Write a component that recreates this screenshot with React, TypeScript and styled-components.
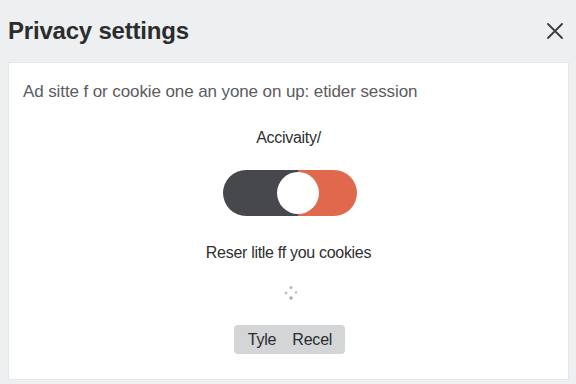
import React from "react";
import styled, { createGlobalStyle } from "styled-components";

const Global = createGlobalStyle`
  html, body {
    margin: 0;
    padding: 0;
    background: #eeeff1;
    font-family: "Liberation Sans", Arial, sans-serif;
  }
`;

const Page = styled.div`
  width: 576px;
  height: 384px;
  display: flex;
  flex-direction: column;
  box-sizing: border-box;
  padding: 0 7px 4px 8px;
`;

const Header = styled.div`
  height: 62px;
  display: flex;
  align-items: center;
  justify-content: space-between;
`;

const Title = styled.h1`
  margin: 0;
  font-size: 24px;
  font-weight: 700;
  color: #2b2c2e;
  letter-spacing: -0.2px;
`;

const Close = styled.button`
  border: 0;
  background: none;
  padding: 0;
  width: 22px;
  height: 22px;
  display: flex;
  align-items: center;
  justify-content: center;
  margin-right: 3px;
`;

const Card = styled.div`
  flex: 1;
  background: #ffffff;
  border: 1px solid #e6e7e9;
  display: flex;
  flex-direction: column;
  align-items: center;
`;

const Intro = styled.p`
  align-self: stretch;
  margin: 19px 0 0 14px;
  font-size: 17px;
  line-height: 20px;
  color: #5a5b5e;
  letter-spacing: -0.1px;
`;

const Label = styled.div<{ $top: number }>`
  margin-top: ${(p) => p.$top}px;
  font-size: 16px;
  line-height: 18px;
  color: #2e2f31;
  letter-spacing: -0.3px;
`;

const Toggle = styled.div`
  margin-top: 23px;
  width: 134px;
  height: 46px;
  border-radius: 23px;
  overflow: hidden;
  display: flex;
  align-items: center;
  justify-content: center;
  background: linear-gradient(to right, #47484c 0 56%, #e0684c 56% 100%);
  margin-left: 2px;
`;

const Knob = styled.div`
  width: 42px;
  height: 42px;
  border-radius: 50%;
  background: #ffffff;
  margin-left: 16px;
`;

const Spinner = styled.svg`
  margin-top: 23px;
  margin-left: 4px;
`;

const Actions = styled.div`
  margin-top: 24px;
  display: flex;
  gap: 16px;
  background: #d4d5d7;
  border-radius: 4px;
  padding: 0 13px 0 14px;
  height: 29px;
  align-items: center;
  margin-left: 2px;
`;

const Action = styled.span`
  font-size: 16px;
  color: #2a2b2d;
  letter-spacing: -0.2px;
`;

export default function App() {
  return (
    <>
      <Global />
      <Page>
        <Header>
          <Title>Privacy settings</Title>
          <Close aria-label="Close">
            <svg width="18" height="18" viewBox="0 0 18 18">
              <path d="M2 2 L16 16 M16 2 L2 16" stroke="#3a3b3e" strokeWidth="1.8" strokeLinecap="round" />
            </svg>
          </Close>
        </Header>
        <Card>
          <Intro>Ad sitte f or cookie one an yone on up: etider session</Intro>
          <Label $top={27}>Accivaity/</Label>
          <Toggle>
            <Knob />
          </Toggle>
          <Label $top={28}>Reser litle ff you cookies</Label>
          <Spinner width="16" height="16" viewBox="0 0 16 16">
            <circle cx="8" cy="2.5" r="1.6" fill="#b9babd" />
            <circle cx="13" cy="7.5" r="1.4" fill="#c8c9cc" />
            <circle cx="8" cy="13" r="1.7" fill="#a9aaad" />
            <circle cx="3" cy="8" r="1.5" fill="#c3c4c7" />
          </Spinner>
          <Actions>
            <Action>Tyle</Action>
            <Action>Recel</Action>
          </Actions>
        </Card>
      </Page>
    </>
  );
}
